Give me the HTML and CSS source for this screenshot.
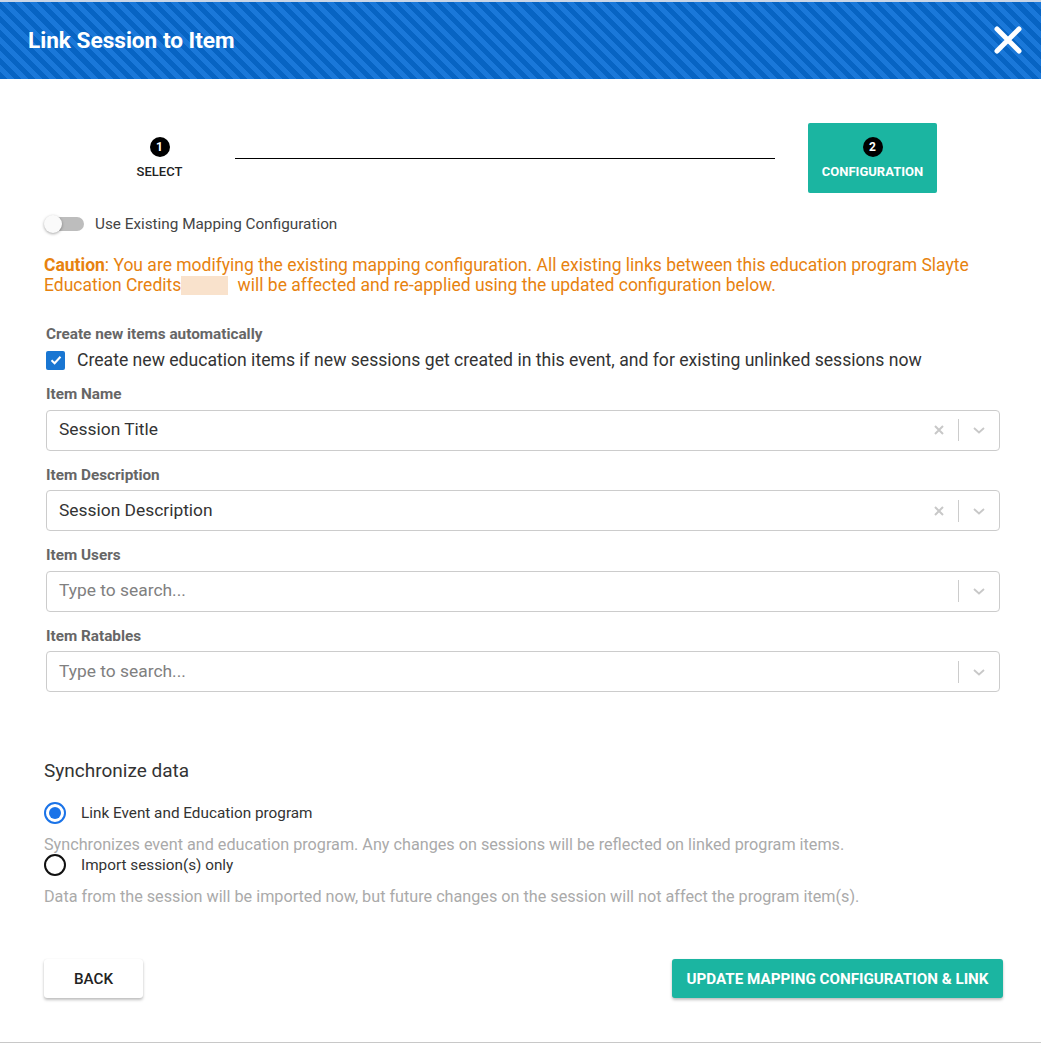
FILE: index.html
```html
<!DOCTYPE html>
<html>
<head>
<meta charset="utf-8">
<link rel="stylesheet" href="styles.css">
</head>
<body>
<div class="dialog">
  <header class="header">
    <h1 class="title">Link Session to Item</h1>
    <svg class="close" width="30" height="30" viewBox="0 0 30 30"><path d="M4 4 L26 26 M26 4 L4 26" stroke="#fff" stroke-width="5" stroke-linecap="round"/></svg>
  </header>

  <div class="content">
    <div class="stepper">
      <div class="step">
        <span class="step-num">1</span>
        <span class="step-label">SELECT</span>
      </div>
      <div class="step-line"></div>
      <div class="step step-active">
        <span class="step-num">2</span>
        <span class="step-label">CONFIGURATION</span>
      </div>
    </div>

    <div class="toggle-row">
      <span class="toggle"><span class="toggle-knob"></span></span>
      <span class="toggle-label">Use Existing Mapping Configuration</span>
    </div>

    <p class="caution"><b>Caution</b>: You are modifying the existing mapping configuration. All existing links between this education program Slayte Education Credits<span class="redact"></span> will be affected and re-applied using the updated configuration below.</p>

    <div class="form">
      <div class="label">Create new items automatically</div>
      <div class="check-row">
        <span class="checkbox"><svg width="14" height="14" viewBox="0 0 14 14"><path d="M2.5 7.2 L5.6 10.2 L11.5 3.8" fill="none" stroke="#fff" stroke-width="2"/></svg></span>
        <span class="check-label">Create new education items if new sessions get created in this event, and for existing unlinked sessions now</span>
      </div>

      <div class="label field-label">Item Name</div>
      <div class="select">
        <span class="select-value">Session Title</span>
        <span class="clear"><svg width="12" height="12" viewBox="0 0 12 12"><path d="M2 2 L10 10 M10 2 L2 10" stroke="#c8c8c8" stroke-width="2"/></svg></span>
        <span class="sep"></span>
        <span class="chev"><svg width="14" height="10" viewBox="0 0 14 10"><path d="M2 3 L7 7.5 L12 3" fill="none" stroke="#c8c8c8" stroke-width="1.8"/></svg></span>
      </div>

      <div class="label field-label">Item Description</div>
      <div class="select">
        <span class="select-value">Session Description</span>
        <span class="clear"><svg width="12" height="12" viewBox="0 0 12 12"><path d="M2 2 L10 10 M10 2 L2 10" stroke="#c8c8c8" stroke-width="2"/></svg></span>
        <span class="sep"></span>
        <span class="chev"><svg width="14" height="10" viewBox="0 0 14 10"><path d="M2 3 L7 7.5 L12 3" fill="none" stroke="#c8c8c8" stroke-width="1.8"/></svg></span>
      </div>

      <div class="label field-label">Item Users</div>
      <div class="select">
        <span class="select-value placeholder">Type to search...</span>
        <span class="sep"></span>
        <span class="chev"><svg width="14" height="10" viewBox="0 0 14 10"><path d="M2 3 L7 7.5 L12 3" fill="none" stroke="#c8c8c8" stroke-width="1.8"/></svg></span>
      </div>

      <div class="label field-label">Item Ratables</div>
      <div class="select">
        <span class="select-value placeholder">Type to search...</span>
        <span class="sep"></span>
        <span class="chev"><svg width="14" height="10" viewBox="0 0 14 10"><path d="M2 3 L7 7.5 L12 3" fill="none" stroke="#c8c8c8" stroke-width="1.8"/></svg></span>
      </div>
    </div>

    <h2 class="sync-title">Synchronize data</h2>

    <div class="radio-row first-radio">
      <span class="radio radio-on"><span class="radio-dot"></span></span>
      <span class="radio-label">Link Event and Education program</span>
    </div>
    <p class="radio-desc">Synchronizes event and education program. Any changes on sessions will be reflected on linked program items.</p>
    <div class="radio-row">
      <span class="radio"></span>
      <span class="radio-label">Import session(s) only</span>
    </div>
    <p class="radio-desc">Data from the session will be imported now, but future changes on the session will not affect the program item(s).</p>

    <div class="actions">
      <button class="btn btn-back">BACK</button>
      <button class="btn btn-primary">UPDATE MAPPING CONFIGURATION &amp; LINK</button>
    </div>
  </div>
</div>
</body>
</html>
```

FILE: styles.css
```css
* { box-sizing: border-box; }
html, body { margin: 0; padding: 0; background: #fff; }
body { font-family: Roboto, "Noto Sans", Arial, sans-serif; color: #333; }

.dialog {
  width: 1041px;
  height: 1043px;
  border-bottom: 1px solid #c8c8c8;
}

.header {
  height: 79px;
  border-top: 2px solid #c9d5e6;
  background: repeating-linear-gradient(45deg, #0764c3 0px, #0764c3 5px, #1a78d9 5px, #1a78d9 10px);
  display: flex;
  align-items: center;
  justify-content: space-between;
  padding: 0 18px 0 28px;
}
.title {
  margin: 0;
  color: #fff;
  font-size: 22.6px;
  line-height: 26px;
  font-weight: 700;
}
.close { display: block; margin-top: -1px; }

.content { padding: 44px 38px 0 44px; }

.stepper {
  display: flex;
  align-items: center;
  height: 70px;
  padding-left: 51px;
}
.step {
  width: 129px;
  height: 70px;
  display: flex;
  flex-direction: column;
  align-items: center;
  padding-top: 14px;
  border-radius: 2px;
}
.step-num {
  width: 20px;
  height: 20px;
  border-radius: 50%;
  background: #000;
  color: #fff;
  font-size: 12px;
  font-weight: 700;
  display: flex;
  align-items: center;
  justify-content: center;
}
.step-label {
  margin-top: 7px;
  font-size: 13px;
  line-height: 15px;
  color: #222;
  font-weight: 500;
}
.step-active { background: #1bb5a1; }
.step-active .step-label { color: #fff; font-weight: 700; }
.step-line {
  width: 540px;
  height: 1px;
  background: #000;
  margin: 0 33px 0 11px;
}

.toggle-row {
  display: flex;
  align-items: center;
  margin-top: 22px;
  height: 18px;
}
.toggle {
  position: relative;
  width: 38px;
  height: 14px;
  border-radius: 7px;
  background: #bdbdbd;
  margin-left: 2px;
}
.toggle-knob {
  position: absolute;
  left: -2px;
  top: -2px;
  width: 18px;
  height: 18px;
  border-radius: 50%;
  background: #fafafa;
  box-shadow: 0 1px 3px rgba(0,0,0,0.35);
}
.toggle-label {
  margin-left: 11px;
  font-size: 15.3px;
  color: #444;
}

.caution {
  margin: 22px 0 0 0;
  font-size: 17.5px;
  line-height: 20px;
  color: #e7820f;
}
.caution b { font-weight: 700; }
.redact {
  display: inline-block;
  width: 47px;
  height: 19px;
  background: #f9e2cc;
  vertical-align: -4px;
  margin-right: 5px;
}

.form { padding: 0 3px 0 2px; margin-top: 31px; }
.label {
  font-size: 15.3px;
  line-height: 17px;
  font-weight: 700;
  color: #666;
}
.field-label { margin-top: 16px; margin-bottom: 6.5px; }
.check-row {
  display: flex;
  align-items: center;
  margin-top: 7px;
  height: 20px;
}
.checkbox {
  width: 19px;
  height: 19px;
  border-radius: 2px;
  background: #1976d2;
  display: flex;
  align-items: center;
  justify-content: center;
}
.check-label {
  margin-left: 12px;
  font-size: 17.6px;
  color: #333;
}

.select {
  height: 41px;
  border: 1px solid #ccc;
  border-radius: 4px;
  display: flex;
  align-items: center;
  padding-left: 12px;
}
.select-value {
  flex: 1;
  font-size: 17.4px;
  line-height: 20px;
  color: #333;
  margin-top: -2px;
}
.placeholder { color: #808080; }
.clear { width: 20px; display: flex; justify-content: center; margin-right: 9px; }
.sep { width: 1px; height: 22px; background: #ccc; }
.chev { width: 40px; display: flex; justify-content: center; }

.sync-title {
  margin: 68px 0 0 0;
  font-size: 19px;
  line-height: 22px;
  font-weight: 400;
  color: #333;
}
.radio-row {
  display: flex;
  align-items: center;
  height: 22px;
}
.first-radio { margin-top: 20px; }
.radio {
  width: 22px;
  height: 22px;
  border-radius: 50%;
  border: 2px solid #111;
  display: flex;
  align-items: center;
  justify-content: center;
}
.radio-on { border-color: #1a73e8; }
.radio-dot { width: 12px; height: 12px; border-radius: 50%; background: #1a73e8; }
.radio-label { margin-left: 15px; font-size: 15.3px; color: #333; }
.radio-desc {
  margin: 11px 0 -1px 0;
  font-size: 16.2px;
  line-height: 20px;
  color: #aaa;
}

.actions {
  display: flex;
  justify-content: space-between;
  margin-top: 53px;
}
.btn {
  height: 39px;
  border: none;
  border-radius: 3px;
  font-family: Roboto, sans-serif;
  font-size: 15.2px;
  font-weight: 500;
  cursor: pointer;
  box-shadow: 0 2px 3px rgba(0,0,0,0.25), 0 0 1px rgba(0,0,0,0.1);
}
.btn-back { width: 99px; background: #fff; color: #222; }
.btn-primary {
  width: 331px;
  background: #1bb5a1;
  color: #fff;
  font-weight: 700;
}
```
